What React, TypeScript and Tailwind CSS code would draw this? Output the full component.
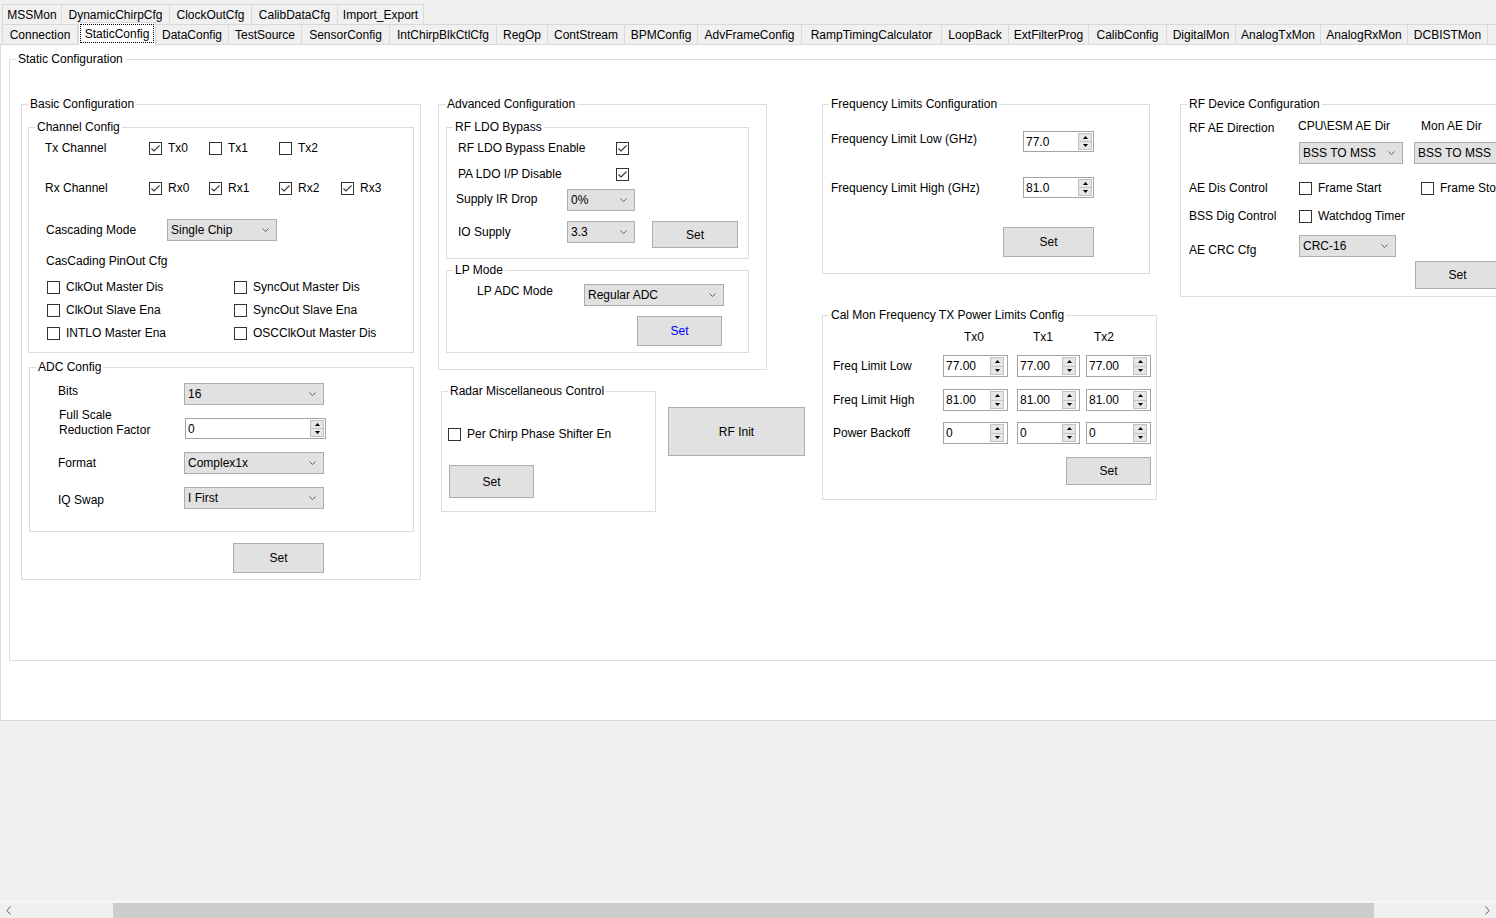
import React from "react";

type WithClass = { className?: string };

function Group({ title, className = "", children }: { title: string; className?: string; children?: React.ReactNode }) {
  return (
    <fieldset className={`border border-[#dcdcdc] shrink-0 min-w-0 ${className}`}>
      <legend className="ml-[6px] px-[2px] leading-[14px] whitespace-nowrap">{title}</legend>
      {children}
    </fieldset>
  );
}

function Check({ checked = false, label, className = "" }: { checked?: boolean; label?: string } & WithClass) {
  return (
    <div className={`flex items-center h-[14px] shrink-0 ${className}`}>
      <span className="w-[13px] h-[13px] border border-[#333333] bg-white flex items-center justify-center shrink-0">
        {checked && (
          <svg width="11" height="11" viewBox="0 0 11 11">
            <path d="M1.5 5.5 L4 8 L9.5 2.5" stroke="#333333" strokeWidth="1.1" fill="none" />
          </svg>
        )}
      </span>
      {label && <span className="ml-[6px] whitespace-nowrap">{label}</span>}
    </div>
  );
}

function Combo({ value, className = "" }: { value: string } & WithClass) {
  return (
    <div className={`h-[22px] shrink-0 bg-[#e1e1e1] border border-[#adadad] flex items-center pl-[3px] pr-[7px] ${className}`}>
      <span className="flex-1 whitespace-nowrap overflow-hidden">{value}</span>
      <svg width="7" height="4" viewBox="0 0 7 4" className="shrink-0">
        <path d="M0.5 0.5 L3.5 3.5 L6.5 0.5" stroke="#5f5f5f" strokeWidth="1" fill="none" />
      </svg>
    </div>
  );
}

function Spin({ className = "" }: WithClass) {
  return (
    <div className={`w-[14px] shrink-0 flex flex-col ${className}`}>
      <div className="flex-1 flex items-center justify-center bg-[#e6e6e6] border border-[#c2c2c2]">
        <svg width="5" height="3" viewBox="0 0 5 3">
          <path d="M0 3 L2.5 0 L5 3 Z" fill="#000" />
        </svg>
      </div>
      <div className="flex-1 flex items-center justify-center bg-[#e6e6e6] border border-t-0 border-[#c2c2c2]">
        <svg width="5" height="3" viewBox="0 0 5 3">
          <path d="M0 0 L2.5 3 L5 0 Z" fill="#000" />
        </svg>
      </div>
    </div>
  );
}

function Num({ value, className = "", spinGap = "mr-[1px]" }: { value: string; spinGap?: string } & WithClass) {
  return (
    <div className={`shrink-0 bg-white border border-[#a3a3a3] flex ${className}`}>
      <span className="flex-1 pl-[2px] flex items-center whitespace-nowrap">{value}</span>
      <Spin className={`my-[1px] ${spinGap}`} />
    </div>
  );
}

function Btn({ label, className = "", blue = false }: { label: string; blue?: boolean } & WithClass) {
  return (
    <button
      type="button"
      className={`shrink-0 bg-[#e1e1e1] border border-[#adadad] flex items-center justify-center ${blue ? "text-[#0000ff]" : "text-black"} ${className}`}
    >
      {label}
    </button>
  );
}

const row1: [string, string][] = [
  ["MSSMon", "w-[60px]"],
  ["DynamicChirpCfg", "w-[108px]"],
  ["ClockOutCfg", "w-[82px]"],
  ["CalibDataCfg", "w-[86px]"],
  ["Import_Export", "w-[86px]"],
];

const row2after: [string, string][] = [
  ["DataConfig", "w-[73px]"],
  ["TestSource", "w-[73px]"],
  ["SensorConfig", "w-[88px]"],
  ["IntChirpBlkCtlCfg", "w-[107px]"],
  ["RegOp", "w-[51px]"],
  ["ContStream", "w-[77px]"],
  ["BPMConfig", "w-[73px]"],
  ["AdvFrameConfig", "w-[104px]"],
  ["RampTimingCalculator", "w-[140px]"],
  ["LoopBack", "w-[67px]"],
  ["ExtFilterProg", "w-[80px]"],
  ["CalibConfig", "w-[78px]"],
  ["DigitalMon", "w-[69px]"],
  ["AnalogTxMon", "w-[85px]"],
  ["AnalogRxMon", "w-[87px]"],
  ["DCBISTMon", "w-[80px]"],
  ["TxBistMon", "w-[80px]"],
];

function Tab({ label, w, first = false }: { label: string; w: string; first?: boolean }) {
  return (
    <div
      className={`h-full shrink-0 border-t border-r border-[#d9d9d9] flex items-center justify-center whitespace-nowrap ${first ? "border-l" : ""} ${w}`}
    >
      {label}
    </div>
  );
}

function BasicConfig() {
  return (
    <Group title="Basic Configuration" className="w-[400px] h-[483px]">
      <Group title="Channel Config" className="ml-[6px] mt-[9px] w-[386px] h-[233px]">
        <div className="flex items-center h-[14px] mt-[7px]">
          <span className="ml-[16px] w-[104px] shrink-0">Tx Channel</span>
          <Check checked label="Tx0" className="w-[60px]" />
          <Check label="Tx1" className="w-[70px]" />
          <Check label="Tx2" />
        </div>
        <div className="flex items-center h-[14px] mt-[26px]">
          <span className="ml-[16px] w-[104px] shrink-0">Rx Channel</span>
          <Check checked label="Rx0" className="w-[60px]" />
          <Check checked label="Rx1" className="w-[70px]" />
          <Check checked label="Rx2" className="w-[62px]" />
          <Check checked label="Rx3" />
        </div>
        <div className="flex items-center h-[22px] mt-[24px]">
          <span className="ml-[17px] w-[121px] shrink-0">Cascading Mode</span>
          <Combo value="Single Chip" className="w-[110px]" />
        </div>
        <div className="ml-[17px] mt-[13px] h-[14px]">CasCading PinOut Cfg</div>
        <div className="mt-[12px] ml-[18px] grid grid-cols-[187px_auto] gap-y-[9px]">
          <Check label="ClkOut Master Dis" />
          <Check label="SyncOut Master Dis" />
          <Check label="ClkOut Slave Ena" />
          <Check label="SyncOut Slave Ena" />
          <Check label="INTLO Master Ena" />
          <Check label="OSCClkOut Master Dis" />
        </div>
      </Group>
      <Group title="ADC Config" className="ml-[7px] mt-[7px] w-[385px] h-[172px]">
        <div className="flex items-start mt-[9px]">
          <span className="ml-[28px] w-[126px] mt-[1px] shrink-0">Bits</span>
          <Combo value="16" className="w-[140px]" />
        </div>
        <div className="flex items-start mt-[3px]">
          <div className="ml-[29px] w-[126px] leading-[15px] shrink-0">
            <div>Full Scale</div>
            <div>Reduction Factor</div>
          </div>
          <Num value="0" className="mt-[10px] w-[141px] h-[21px]" />
        </div>
        <div className="flex items-center h-[22px] mt-[13px]">
          <span className="ml-[28px] w-[126px] shrink-0">Format</span>
          <Combo value="Complex1x" className="w-[140px]" />
        </div>
        <div className="flex items-start mt-[13px]">
          <span className="ml-[28px] w-[126px] mt-[6px] shrink-0">IQ Swap</span>
          <Combo value="I First" className="w-[140px]" />
        </div>
      </Group>
      <Btn label="Set" className="ml-[211px] mt-[11px] w-[91px] h-[30px]" />
    </Group>
  );
}

function AdvancedColumn() {
  return (
    <div className="w-[384px] shrink-0 flex flex-col">
      <Group title="Advanced Configuration" className="w-[329px] h-[273px]">
        <Group title="RF LDO Bypass" className="ml-[7px] mt-[9px] w-[303px] h-[139px]">
          <div className="flex items-center h-[14px] mt-[7px]">
            <span className="ml-[11px] w-[158px] shrink-0">RF LDO Bypass Enable</span>
            <Check checked />
          </div>
          <div className="flex items-center h-[14px] mt-[12px]">
            <span className="ml-[11px] w-[158px] shrink-0">PA LDO I/P Disable</span>
            <Check checked />
          </div>
          <div className="flex items-start mt-[8px]">
            <span className="ml-[9px] w-[111px] mt-[3px] shrink-0">Supply IR Drop</span>
            <Combo value="0%" className="w-[68px]" />
          </div>
          <div className="flex items-start mt-[10px]">
            <span className="ml-[11px] w-[109px] mt-[4px] shrink-0">IO Supply</span>
            <Combo value="3.3" className="w-[68px]" />
            <Btn label="Set" className="ml-[17px] w-[86px] h-[27px]" />
          </div>
        </Group>
        <Group title="LP Mode" className="ml-[7px] mt-[4px] w-[303px] h-[90px]">
          <div className="flex items-start mt-[7px]">
            <span className="ml-[30px] w-[107px] shrink-0">LP ADC Mode</span>
            <Combo value="Regular ADC" className="w-[140px]" />
          </div>
          <Btn label="Set" blue className="ml-[190px] mt-[10px] w-[85px] h-[30px]" />
        </Group>
      </Group>
      <div className="flex items-start mt-[14px]">
        <Group title="Radar Miscellaneous Control" className="ml-[3px] w-[215px] h-[128px]">
          <Check label="Per Chirp Phase Shifter En" className="ml-[6px] mt-[29px]" />
          <Btn label="Set" className="ml-[7px] mt-[24px] w-[85px] h-[33px]" />
        </Group>
        <Btn label="RF Init" className="ml-[12px] mt-[23px] w-[137px] h-[49px]" />
      </div>
    </div>
  );
}

function FreqColumn() {
  const rows: [string, string][] = [
    ["Freq Limit Low", "77.00"],
    ["Freq Limit High", "81.00"],
    ["Power Backoff", "0"],
  ];
  const rowMt = ["mt-[11px]", "mt-[12px]", "mt-[11px]"];
  return (
    <div className="w-[358px] shrink-0 flex flex-col">
      <Group title="Frequency Limits Configuration" className="w-[328px] h-[177px]">
        <div className="flex items-start mt-[20px]">
          <span className="ml-[8px] w-[192px] mt-[1px] shrink-0">Frequency Limit Low (GHz)</span>
          <Num value="77.0" className="w-[71px] h-[21px]" />
        </div>
        <div className="flex items-start mt-[25px]">
          <span className="ml-[8px] w-[192px] mt-[4px] shrink-0">Frequency Limit High (GHz)</span>
          <Num value="81.0" className="w-[71px] h-[21px]" />
        </div>
        <Btn label="Set" className="ml-[180px] mt-[29px] w-[91px] h-[30px]" />
      </Group>
      <Group title="Cal Mon Frequency TX Power Limits Config" className="mt-[34px] w-[335px] h-[192px]">
        <div className="flex h-[14px] mt-[8px]">
          <span className="ml-[141px] w-[69px] shrink-0">Tx0</span>
          <span className="w-[61px] shrink-0">Tx1</span>
          <span className="shrink-0">Tx2</span>
        </div>
        {rows.map(([label, v], i) => (
          <div key={label} className={`flex items-center h-[22px] ${rowMt[i]}`}>
            <span className="ml-[10px] w-[110px] shrink-0">{label}</span>
            <Num value={v} spinGap="mr-[3px]" className="w-[65px] h-[22px]" />
            <Num value={v} spinGap="mr-[3px]" className="ml-[9px] w-[63px] h-[22px]" />
            <Num value={v} spinGap="mr-[3px]" className="ml-[6px] w-[65px] h-[22px]" />
          </div>
        ))}
        <Btn label="Set" className="ml-[243px] mt-[13px] w-[85px] h-[28px]" />
      </Group>
    </div>
  );
}

function RfDeviceColumn() {
  return (
    <Group title="RF Device Configuration" className="w-[340px] h-[200px]">
      <div className="flex items-start mt-[8px]">
        <span className="ml-[8px] w-[109px] mt-[2px] shrink-0">RF AE Direction</span>
        <span className="w-[123px] shrink-0 whitespace-nowrap">{"CPU\\ESM AE Dir"}</span>
        <span className="shrink-0 whitespace-nowrap">Mon AE Dir</span>
      </div>
      <div className="flex mt-[7px] ml-[118px]">
        <Combo value="BSS TO MSS" className="w-[104px]" />
        <Combo value="BSS TO MSS" className="ml-[11px] w-[104px]" />
      </div>
      <div className="flex items-center h-[14px] mt-[17px]">
        <span className="ml-[8px] w-[110px] shrink-0">AE Dis Control</span>
        <Check label="Frame Start" className="w-[122px]" />
        <Check label="Frame Stop" />
      </div>
      <div className="flex items-center h-[14px] mt-[14px]">
        <span className="ml-[8px] w-[110px] shrink-0">BSS Dig Control</span>
        <Check label="Watchdog Timer" />
      </div>
      <div className="flex items-start mt-[12px]">
        <span className="ml-[8px] w-[110px] mt-[8px] shrink-0">AE CRC Cfg</span>
        <Combo value="CRC-16" className="w-[97px]" />
      </div>
      <Btn label="Set" className="ml-[234px] mt-[4px] w-[85px] h-[28px]" />
    </Group>
  );
}

export default function App() {
  return (
    <div className="w-[1496px] h-[918px] overflow-hidden bg-[#f0f0f0] flex flex-col text-[12px] leading-[14px] text-black font-['Liberation_Sans',Arial,sans-serif]">
      {/* Tab strip */}
      <div className="pt-[4px] pl-[2px] shrink-0">
        <div className="flex h-[20px]">
          {row1.map(([t, w], i) => (
            <Tab key={t} label={t} w={w} first={i === 0} />
          ))}
        </div>
        <div className="flex h-[20px] items-start">
          <Tab label="Connection" w="w-[76px]" first />
          <div className="relative z-10 shrink-0 w-[78px] h-[23px] -mt-[2px] bg-white border-t border-l border-r border-[#d9d9d9] flex justify-center">
            <span className="mt-[1px] w-[74px] h-[19px] border border-dotted border-black flex items-center justify-center whitespace-nowrap">
              StaticConfig
            </span>
          </div>
          {row2after.map(([t, w]) => (
            <Tab key={t} label={t} w={w} />
          ))}
        </div>
      </div>

      {/* Tab page */}
      <div className="h-[677px] shrink-0 bg-white border-l border-t border-b border-[#d9d9d9] overflow-hidden">
        <Group title="Static Configuration" className="ml-[8px] mt-[7px] w-[1600px] h-[609px]">
          <div className="flex items-start ml-[11px] mt-[31px]">
            <BasicConfig />
            <div className="ml-[17px] shrink-0">
              <AdvancedColumn />
            </div>
            <FreqColumn />
            <RfDeviceColumn />
          </div>
        </Group>
      </div>

      <div className="flex-1" />

      {/* Horizontal scrollbar */}
      <div className="h-[17px] shrink-0 border-t border-[#fafafa] bg-[#f0f0f0] flex items-center">
        <div className="w-[17px] h-full flex items-center justify-center shrink-0">
          <svg width="5" height="9" viewBox="0 0 5 9">
            <path d="M4.5 0.5 L0.8 4.5 L4.5 8.5" stroke="#606060" strokeWidth="1" fill="none" />
          </svg>
        </div>
        <div className="ml-[96px] w-[1261px] h-[15px] bg-[#cdcdcd] shrink-0" />
        <div className="flex-1" />
        <div className="w-[17px] h-full flex items-center justify-center shrink-0">
          <svg width="5" height="9" viewBox="0 0 5 9">
            <path d="M0.5 0.5 L4.2 4.5 L0.5 8.5" stroke="#606060" strokeWidth="1" fill="none" />
          </svg>
        </div>
      </div>
    </div>
  );
}
